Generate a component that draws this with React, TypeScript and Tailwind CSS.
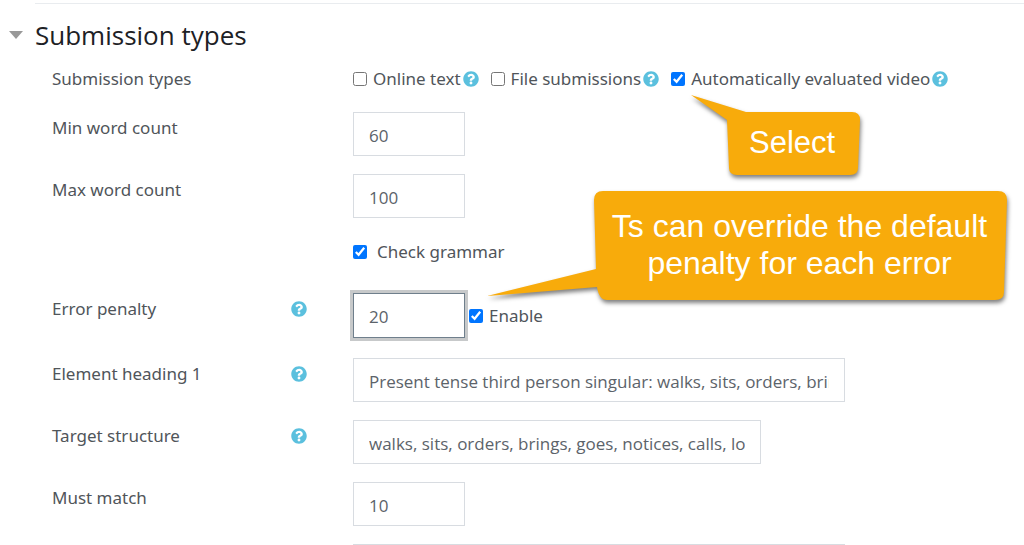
import React from 'react';
import { FaQuestionCircle } from 'react-icons/fa';

interface FieldRowProps {
  label?: string;
  htmlFor?: string;
  help?: boolean;
  children: React.ReactNode;
}

const HelpButton: React.FC<{ topic: string }> = ({ topic }) => (
  <button type="button" aria-label={`Help with ${topic}`} className="shrink-0 text-[#5bc0de]">
    <FaQuestionCircle size={16} />
  </button>
);

const FieldRow: React.FC<FieldRowProps> = ({ label, htmlFor, help, children }) => (
  <div className="flex items-start">
    <div className="flex w-[301px] shrink-0 items-center justify-between pt-1 pr-[46px]">
      {label && <label htmlFor={htmlFor}>{label}</label>}
      {help && label && <HelpButton topic={label} />}
    </div>
    {children}
  </div>
);

const inputClass = "h-11 min-w-0 border border-[#d8dce1] bg-white px-[15px] pt-0.5 font-['Open_Sans',sans-serif] text-[#5c636a] outline-none";

const TextField: React.FC<{ id: string; value: string; className: string }> = ({ id, value, className }) => (
  <input id={id} type="text" defaultValue={value} className={`${inputClass} ${className}`} />
);

interface CheckFieldProps {
  id: string;
  label: string;
  checked?: boolean;
  help?: boolean;
  className?: string;
}

const CheckField: React.FC<CheckFieldProps> = ({ id, label, checked, help, className = 'gap-1.5' }) => (
  <div className={`flex items-center ${className}`}>
    <input id={id} type="checkbox" defaultChecked={checked} className="size-3.5 shrink-0" />
    <span className="flex items-center gap-0.5">
      <label htmlFor={id} className="whitespace-nowrap">{label}</label>
      {help && <HelpButton topic={label} />}
    </span>
  </div>
);

const SelectCallout = () => (
  <div className="absolute top-[92px] left-[688px] h-[90px] w-[180px]">
    <svg viewBox="0 0 180 90" className="absolute inset-0 size-full overflow-visible drop-shadow-[1px_3px_2px_rgba(0,0,0,0.5)]">
      <path fill="#f8ab0b" d="M3 3 L58 20 H164 Q172 20 172 28 L170 76 Q170 83 162 83 H49 Q41 83 41 76 L39 28 Z" />
    </svg>
    <p className="relative pt-[33px] pl-[61px] text-[31px] leading-9 text-white">Select</p>
  </div>
);

const PenaltyCallout = () => (
  <div className="absolute top-[188px] left-[484px] h-[118px] w-[530px]">
    <svg viewBox="0 0 530 118" className="absolute inset-0 size-full overflow-visible drop-shadow-[1px_3px_2px_rgba(0,0,0,0.5)]">
      <path fill="#f8ab0b" d="M3 108 L112 81 L110 12 Q110 3 119 3 H514 Q523 3 523 12 L520 104 Q520 112 511 112 H123 Q115 112 113 99 Z" />
    </svg>
    <p className="relative ml-[109px] w-[413px] pt-5 text-center text-[32px] leading-[37px] text-white">
      Ts can override the default
      <br />
      penalty for each error
    </p>
  </div>
);

export default function App() {
  return (
    <main className="relative h-screen overflow-hidden bg-white pt-[3px] font-['Noto_Sans',sans-serif] text-[17px] leading-6 text-[#50555a]">
      <hr className="ml-[35px] border-[#e9ecef]" />
      <h2 className="mt-[11px] flex items-center font-['Open_Sans',sans-serif] text-[26px] leading-10 text-[#1d2125]">
        <button type="button" aria-expanded="true" className="flex items-center gap-3 pl-[9px]">
          <svg viewBox="0 0 14 8" className="h-2 w-3.5 fill-[#999]">
            <path d="M0 0 H14 L7 8 Z" />
          </svg>
          Submission types
        </button>
      </h2>

      <form className="mt-2 flex flex-col gap-[18px] pl-[52px]">
        <FieldRow label="Submission types">
          <div className="flex h-[31px] items-center gap-3 pt-px">
            <CheckField id="online-text" label="Online text" help />
            <CheckField id="file-submissions" label="File submissions" help />
            <CheckField id="evaluated-video" label="Automatically evaluated video" checked help />
          </div>
        </FieldRow>
        <FieldRow label="Min word count" htmlFor="min-words">
          <TextField id="min-words" value="60" className="w-28" />
        </FieldRow>
        <FieldRow label="Max word count" htmlFor="max-words">
          <TextField id="max-words" value="100" className="w-28" />
        </FieldRow>
        <FieldRow>
          <div className="flex h-[39px] items-center pb-2">
            <CheckField id="check-grammar" label="Check grammar" checked className="gap-2.5" />
          </div>
        </FieldRow>
        <FieldRow label="Error penalty" htmlFor="error-penalty" help>
          <div className="flex items-center gap-1 pb-0.5">
            <input
              id="error-penalty"
              type="text"
              defaultValue="20"
              className="h-[45px] w-28 border border-[#6f7f8c] bg-white px-[15px] pt-0.5 font-['Open_Sans',sans-serif] text-[#5c636a] ring-3 ring-[#c7c9ca] outline-none"
            />
            <CheckField id="penalty-enabled" label="Enable" checked />
          </div>
        </FieldRow>
        <FieldRow label="Element heading 1" htmlFor="heading-1" help>
          <TextField id="heading-1" value="Present tense third person singular: walks, sits, orders, brings, goes" className="w-[492px]" />
        </FieldRow>
        <FieldRow label="Target structure" htmlFor="target" help>
          <TextField id="target" value="walks, sits, orders, brings, goes, notices, calls, looks" className="w-[408px]" />
        </FieldRow>
        <FieldRow label="Must match" htmlFor="must-match">
          <TextField id="must-match" value="10" className="w-28" />
        </FieldRow>
        <FieldRow>
          <input type="text" aria-label="Element heading 2" className={`${inputClass} w-[492px]`} />
        </FieldRow>
      </form>

      <div className="font-['Liberation_Sans',Arial,sans-serif]">
        <SelectCallout />
        <PenaltyCallout />
      </div>
    </main>
  );
}
